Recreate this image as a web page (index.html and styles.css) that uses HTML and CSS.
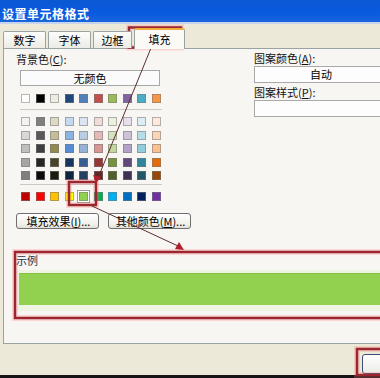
FILE: index.html
```html
<!DOCTYPE HTML>
<html lang="zh-CN">
  <head>
    <title>设置单元格格式</title>
    <meta charset="utf-8">
    <link rel="stylesheet" href="styles.css">
  </head>
  <body>

  <div class="dialog">
    <div class="titlebar">设置单元格格式</div>

    <div class="tabs">
      <span class="tab">数字</span>
      <span class="tab">字体</span>
      <span class="tab narrow">边框</span>
      <span class="tab active">填充</span>
    </div>

    <div class="panel">
      <div class="cols">
        <div class="left">
          <div class="label">背景色(<u>C</u>):</div>
          <div class="nocolor">无颜色</div>

          <div class="swrow">
            <i style="background:#ffffff"></i><i style="background:#000000"></i><i style="background:#eeece1"></i><i style="background:#1f497d"></i><i style="background:#4f81bd"></i><i style="background:#c0504d"></i><i style="background:#9bbb59"></i><i style="background:#8064a2"></i><i style="background:#4bacc6"></i><i style="background:#f79646"></i>
          </div>
          <div class="sep"></div>

          <div class="swgrid">
            <i style="background:#f2f2f2"></i><i style="background:#7f7f7f"></i><i style="background:#ddd9c3"></i><i style="background:#c6d9f0"></i><i style="background:#dbe5f1"></i><i style="background:#f2dcdb"></i><i style="background:#ebf1dd"></i><i style="background:#e5e0ec"></i><i style="background:#dbeef3"></i><i style="background:#fdeada"></i>
            <i style="background:#d8d8d8"></i><i style="background:#595959"></i><i style="background:#c4bd97"></i><i style="background:#8db3e2"></i><i style="background:#b8cce4"></i><i style="background:#e5b9b7"></i><i style="background:#d7e3bc"></i><i style="background:#ccc1d9"></i><i style="background:#b7dde8"></i><i style="background:#fbd5b5"></i>
            <i style="background:#bfbfbf"></i><i style="background:#3f3f3f"></i><i style="background:#938953"></i><i style="background:#548dd4"></i><i style="background:#95b3d7"></i><i style="background:#d99694"></i><i style="background:#c3d69b"></i><i style="background:#b2a2c7"></i><i style="background:#92cddc"></i><i style="background:#fac08f"></i>
            <i style="background:#a5a5a5"></i><i style="background:#262626"></i><i style="background:#494429"></i><i style="background:#17365d"></i><i style="background:#366092"></i><i style="background:#953734"></i><i style="background:#76923c"></i><i style="background:#5f497a"></i><i style="background:#31859b"></i><i style="background:#e36c09"></i>
            <i style="background:#7f7f7f"></i><i style="background:#0c0c0c"></i><i style="background:#1d1b10"></i><i style="background:#0f243e"></i><i style="background:#244061"></i><i style="background:#632423"></i><i style="background:#4f6128"></i><i style="background:#3f3151"></i><i style="background:#205867"></i><i style="background:#974806"></i>
          </div>
          <div class="sep sep2"></div>

          <div class="swrow std">
            <i style="background:#c00000"></i><i style="background:#ff0000"></i><i style="background:#ffc000"></i><i style="background:#ffff00"></i><i class="sel" style="background:#92d050"></i><i style="background:#00b050"></i><i style="background:#00b0f0"></i><i style="background:#0070c0"></i><i style="background:#002060"></i><i style="background:#7030a0"></i>
          </div>

          <div class="btns">
            <span class="btn">填充效果(<u>I</u>)...</span>
            <span class="btn">其他颜色(<u>M</u>)...</span>
          </div>
        </div>

        <div class="right">
          <div class="label">图案颜色(<u>A</u>):</div>
          <div class="field">自动</div>
          <div class="label label2">图案样式(<u>P</u>):</div>
          <div class="field"></div>
        </div>
      </div>

      <div class="sample">
        <div class="label">示例</div>
        <div class="frame"><div class="fill"></div></div>
      </div>
    </div>

    <div class="footer">
      <span class="okbtn"></span>
    </div>
  </div>

  <svg class="marks" width="380" height="378" viewBox="0 0 380 378">
    <g fill="none" stroke="rgba(255,120,120,0.25)" stroke-width="6">
      <rect x="129" y="27.5" width="52" height="20"/>
      <rect x="69" y="182" width="27" height="23"/>
      <rect x="15" y="252" width="380" height="66"/>
      <rect x="357" y="349" width="30" height="26"/>
    </g>
    <g fill="none" stroke="#9c2630" stroke-width="2.5">
      <rect x="129" y="27.5" width="52" height="20"/>
      <rect x="69" y="182" width="27" height="23"/>
      <rect x="15" y="252" width="380" height="66"/>
      <rect x="357" y="349" width="30" height="26"/>
    </g>
    <g stroke="#5a3030" stroke-width="1">
      <line x1="151" y1="48" x2="98" y2="178"/>
      <line x1="92" y1="206" x2="178" y2="246"/>
    </g>
    <g fill="#b0202c">
      <polygon points="96,183 93,175 101,177"/>
      <polygon points="184,250 175,249 179,242"/>
    </g>
  </svg>

  </body>
</html>
```

FILE: styles.css
```css
html {
  height: 100%;
}
body {
  margin: 0;
  padding: 0;
  width: 380px;
  height: 378px;
  overflow: hidden;
  position: relative;
  background: #ece9d8;
  color: #000;
  font-family: "Noto Sans CJK SC", "DejaVu Sans", sans-serif;
  font-size: 11px;
}

u {
  text-decoration: underline;
}

.dialog {
  width: 380px;
  height: 375px;
  overflow: hidden;
  background: #ece9d8;
  border-bottom: 3px solid #151515;
}

.titlebar {
  height: 14px;
  padding: 7px 0 1px 2px;
  line-height: 14px;
  background: linear-gradient(#0b58d2, #0a5ae0 60%, #1b66dc);
  color: #fff;
  font-size: 12px;
  font-weight: bold;
  letter-spacing: 0.5px;
  border-bottom: 2px solid #c7d4ee;
}

.tabs {
  display: flex;
  align-items: flex-end;
  height: 21px;
  padding-left: 3px;
  margin-top: 3px;
  position: relative;
  z-index: 1;
}

.tab {
  width: 41px;
  height: 16px;
  margin-right: 2px;
  line-height: 16px;
  text-align: center;
  background: linear-gradient(#fdfdfb, #ecebe5);
  border: 1px solid #9aa2a4;
  border-bottom: none;
  border-radius: 2px 2px 0 0;
}
.tab.narrow {
  width: 37px;
}
.tab.active {
  width: 49px;
  line-height: 19px;
  background: #fbfaf7;
  border-top: 2px solid #f0b040;
  height: 19px;
  margin-bottom: -1px;
}

.panel {
  margin-left: 3px;
  width: 400px;
  height: 296px;
  border: 1px solid #9aa2a4;
  background: #f7f6f2;
  padding: 3px 0 0 12px;
  box-sizing: border-box;
}

.cols {
  display: grid;
  grid-template-columns: 238px 1fr;
}

.label {
  height: 14px;
  line-height: 14px;
  color: #111;
}

.nocolor {
  margin: 4px 0 0 4px;
  width: 138px;
  height: 14px;
  line-height: 14px;
  border: 1px solid #a8a8a8;
  background: #fbfbfb;
  text-align: center;
}

.swrow, .swgrid {
  display: grid;
  grid-template-columns: repeat(10, 9px);
  column-gap: 5.5px;
  margin-left: 5px;
}
.swrow {
  margin-top: 8px;
}
.swgrid {
  row-gap: 4.6px;
}
.swrow i, .swgrid i {
  display: block;
  width: 9px;
  height: 9px;
  box-sizing: border-box;
  border: 1px solid rgba(120,120,120,0.55);
}
.swrow i.sel {
  outline: 1px solid #ffffff;
  box-shadow: 0 0 0 2px #9a9a9a;
}

.sep {
  margin: 6px 0 7px 4px;
  width: 142px;
  height: 1px;
  background: #c9c9c9;
}
.sep.sep2 {
  margin-top: 4px;
  margin-bottom: 0;
}
.swrow.std {
  margin-top: 7px;
}

.btns {
  display: flex;
  gap: 9px;
  margin-top: 12px;
}
.btn {
  width: 79px;
  height: 14px;
  line-height: 14px;
  padding-left: 2px;
  text-align: center;
  border: 1px solid #6f6f6f;
  border-radius: 3px;
  background: linear-gradient(#ffffff, #f1f0ea 70%, #e2e0d6);
}

.right .label {
  margin-top: -1px;
}
.right .label2 {
  margin-top: 2px;
}
.field {
  margin-top: 1px;
  height: 15px;
  line-height: 15px;
  border: 1px solid #a9a9a9;
  background: #fdfdfd;
  text-align: center;
  padding-right: 14px;
}

.sample {
  margin-top: 24px;
}
.sample .label {
  color: #203050;
}
.frame {
  margin: 3px 0 0 1px;
  padding: 3px 0 6px 2px;
  background: #eef3e2;
}
.fill {
  height: 31px;
  background: #92d050;
  border-top: 1px solid #86c244;
}

.footer {
  display: flex;
  justify-content: flex-end;
  padding-top: 10px;
}
.okbtn {
  width: 28px;
  height: 18px;
  margin-right: -12px;
  border: 1px solid #3d4f78;
  border-radius: 3px;
  background: linear-gradient(#ffffff, #ecebe6);
}

.marks {
  position: absolute;
  top: 0;
  left: 0;
  pointer-events: none;
}
```
